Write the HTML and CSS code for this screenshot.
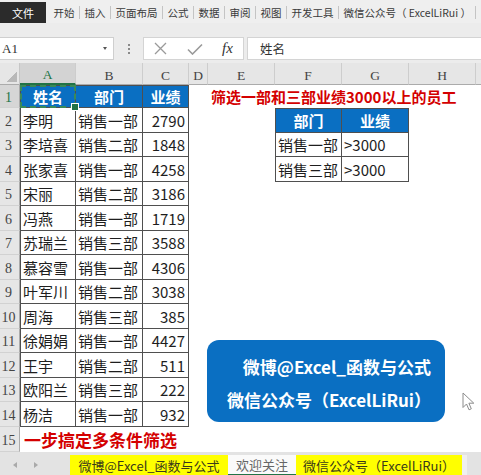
FILE: index.html
```html
<!DOCTYPE html>
<html lang="zh-CN">
<head>
<meta charset="utf-8">
<title>Excel</title>
<link rel="stylesheet" href="styles.css">
</head>
<body>
<div class="app">
  <div class="ribbon">
    <div class="file">文件</div>
    <div class="tab">开始</div>
    <div class="tab">插入</div>
    <div class="tab">页面布局</div>
    <div class="tab">公式</div>
    <div class="tab">数据</div>
    <div class="tab">审阅</div>
    <div class="tab">视图</div>
    <div class="tab">开发工具</div>
    <div class="tab">微信公众号（ ExcelLiRui ）</div>
  </div>

  <div class="fbar">
    <div class="namebox"><span class="ref">A1</span><span class="caret"></span></div>
    <div class="dots"><i></i><i></i><i></i></div>
    <div class="fxbox">
      <svg class="ico-x" width="13" height="13" viewBox="0 0 13 13"><path d="M1 1L12 12M12 1L1 12" stroke="#9a9a9a" stroke-width="1.3" fill="none"/></svg>
      <svg class="ico-ok" width="16" height="12" viewBox="0 0 16 12"><path d="M1 6.5L5.5 11L15 1.5" stroke="#9a9a9a" stroke-width="1.6" fill="none"/></svg>
      <span class="fx">fx</span>
    </div>
    <div class="formula">姓名</div>
  </div>

  <div class="sheet">
    <div class="row colhead">
      <div class="corner"><span class="tri"></span></div>
      <div class="ch on">A</div><div class="ch">B</div><div class="ch">C</div><div class="ch">D</div>
      <div class="ch">E</div><div class="ch">F</div><div class="ch">G</div><div class="ch">H</div><div class="ch last"></div>
    </div>

    <div class="row h23">
      <div class="rh on">1</div>
      <div class="c t tl tt hd ctr sel">姓名</div><div class="c t tt hd ctr">部门</div><div class="c t tt hd ctr">业绩</div>
      <div class="c"></div><div class="c title">筛选一部和三部业绩3000以上的员工</div><div class="c"></div><div class="c"></div><div class="c"></div><div class="c"></div>
    </div>
    <div class="row h25">
      <div class="rh">2</div>
      <div class="c t tl">李明</div><div class="c t">销售一部</div><div class="c t num">2790</div>
      <div class="c"></div><div class="c"></div><div class="c t tl tt hd ctr">部门</div><div class="c t tt hd ctr">业绩</div><div class="c"></div><div class="c"></div>
    </div>
    <div class="row h24">
      <div class="rh">3</div>
      <div class="c t tl">李培喜</div><div class="c t">销售二部</div><div class="c t num">1848</div>
      <div class="c"></div><div class="c"></div><div class="c t tl">销售一部</div><div class="c t">&gt;3000</div><div class="c"></div><div class="c"></div>
    </div>
    <div class="row h25">
      <div class="rh">4</div>
      <div class="c t tl">张家喜</div><div class="c t">销售一部</div><div class="c t num">4258</div>
      <div class="c"></div><div class="c"></div><div class="c t tl">销售三部</div><div class="c t">&gt;3000</div><div class="c"></div><div class="c"></div>
    </div>
    <div class="row h24">
      <div class="rh">5</div>
      <div class="c t tl">宋丽</div><div class="c t">销售二部</div><div class="c t num">3186</div>
      <div class="c"></div><div class="c"></div><div class="c"></div><div class="c"></div><div class="c"></div><div class="c"></div>
    </div>
    <div class="row h25">
      <div class="rh">6</div>
      <div class="c t tl">冯燕</div><div class="c t">销售一部</div><div class="c t num">1719</div>
      <div class="c"></div><div class="c"></div><div class="c"></div><div class="c"></div><div class="c"></div><div class="c"></div>
    </div>
    <div class="row h24">
      <div class="rh">7</div>
      <div class="c t tl">苏瑞兰</div><div class="c t">销售三部</div><div class="c t num">3588</div>
      <div class="c"></div><div class="c"></div><div class="c"></div><div class="c"></div><div class="c"></div><div class="c"></div>
    </div>
    <div class="row h25">
      <div class="rh">8</div>
      <div class="c t tl">慕容雪</div><div class="c t">销售一部</div><div class="c t num">4306</div>
      <div class="c"></div><div class="c"></div><div class="c"></div><div class="c"></div><div class="c"></div><div class="c"></div>
    </div>
    <div class="row h24">
      <div class="rh">9</div>
      <div class="c t tl">叶军川</div><div class="c t">销售二部</div><div class="c t num">3038</div>
      <div class="c"></div><div class="c"></div><div class="c"></div><div class="c"></div><div class="c"></div><div class="c"></div>
    </div>
    <div class="row h25">
      <div class="rh">10</div>
      <div class="c t tl">周海</div><div class="c t">销售三部</div><div class="c t num">385</div>
      <div class="c"></div><div class="c"></div><div class="c"></div><div class="c"></div><div class="c"></div><div class="c"></div>
    </div>
    <div class="row h24">
      <div class="rh">11</div>
      <div class="c t tl">徐娟娟</div><div class="c t">销售一部</div><div class="c t num">4427</div>
      <div class="c"></div><div class="c"></div><div class="c"></div><div class="c"></div><div class="c"></div><div class="c"></div>
    </div>
    <div class="row h25">
      <div class="rh">12</div>
      <div class="c t tl">王宇</div><div class="c t">销售二部</div><div class="c t num">511</div>
      <div class="c"></div><div class="c"></div><div class="c"></div><div class="c"></div><div class="c"></div><div class="c"></div>
    </div>
    <div class="row h24">
      <div class="rh">13</div>
      <div class="c t tl">欧阳兰</div><div class="c t">销售三部</div><div class="c t num">222</div>
      <div class="c"></div><div class="c"></div><div class="c"></div><div class="c"></div><div class="c"></div><div class="c"></div>
    </div>
    <div class="row h25">
      <div class="rh">14</div>
      <div class="c t tl">杨洁</div><div class="c t">销售一部</div><div class="c t num">932</div>
      <div class="c"></div><div class="c"></div><div class="c"></div><div class="c"></div><div class="c"></div><div class="c"></div>
    </div>
    <div class="row h25">
      <div class="rh">15</div>
      <div class="c slogan">一步搞定多条件筛选</div><div class="c"></div><div class="c"></div>
      <div class="c"></div><div class="c"></div><div class="c"></div><div class="c"></div><div class="c"></div><div class="c"></div>
    </div>
  </div>

  <div class="sheettabs">
    <div class="nav"><span class="arr-l"></span><span class="arr-r"></span></div>
    <div class="st yellow w1">微博@Excel_函数与公式</div>
    <div class="st active">欢迎关注</div>
    <div class="st yellow w3">微信公众号（ExcelLiRui）</div>
    <div class="st-end"></div>
  </div>

  <div class="promo">
    <div>微博@Excel_函数与公式</div>
    <div>微信公众号（ExcelLiRui）</div>
  </div>

  <svg class="cursor" width="13" height="19" viewBox="0 0 13 19"><path d="M1 1L1 15.5L4.5 12L7 17.8L9.3 16.8L6.9 11.2L11.8 11.2Z" fill="#fff" stroke="#8c8c8c" stroke-width="1" stroke-linejoin="round"/></svg>
</div>
</body>
</html>
```

FILE: styles.css
```css
* { box-sizing: border-box; margin: 0; padding: 0; }
html, body { width: 481px; height: 475px; overflow: hidden; }
body {
  font-family: "Noto Sans CJK SC", "Noto Sans", sans-serif;
  background: #ececec;
  color: #222;
}
.app { position: relative; width: 481px; height: 475px; }

/* ribbon */
.ribbon {
  height: 23px;
  display: flex;
  align-items: center;
  font-size: 10.5px;
  color: #3a3a3a;
  background: #efefef;
}
.file {
  align-self: flex-end;
  width: 46px;
  height: 21px;
  margin-right: 3px;
  background: #2b2b2b;
  color: #fff;
  display: flex;
  align-items: center;
  justify-content: center;
  font-size: 11px;
}
.tab {
  padding: 0 4.5px;
  line-height: 13px;
  border-right: 1px solid #c4c4c4;
  margin-top: 2px;
  white-space: nowrap;
}

/* formula bar */
.fbar {
  margin-top: 14px;
  height: 23px;
  display: flex;
}
.namebox {
  width: 114px;
  background: #fff;
  border: 1px solid #cfcfcf;
  border-left: none;
  display: flex;
  align-items: center;
  justify-content: space-between;
  padding: 0 6px 0 2px;
}
.ref { font-family: "Liberation Serif", serif; font-size: 13px; color: #333; }
.caret {
  width: 0; height: 0;
  border-left: 2.5px solid transparent;
  border-right: 2.5px solid transparent;
  border-top: 3px solid #555;
}
.dots {
  width: 29px;
  display: flex;
  flex-direction: column;
  align-items: center;
  justify-content: center;
  gap: 2px;
}
.dots i { width: 2px; height: 2px; background: #8a8a8a; display: block; }
.fxbox {
  width: 101px;
  background: #fff;
  border: 1px solid #d4d4d4;
  display: flex;
  align-items: center;
  padding-left: 10px;
}
.ico-x { margin-right: 20px; }
.ico-ok { margin-right: 19px; }
.fx { font-family: "Liberation Serif", serif; font-style: italic; font-size: 15px; color: #333; }
.formula {
  margin-left: 3px;
  flex: 1;
  background: #fff;
  border: 1px solid #d4d4d4;
  border-right: none;
  display: flex;
  align-items: center;
  padding-left: 12px;
  font-size: 12.5px;
  color: #333;
}

/* sheet */
.sheet { margin-top: 3px; background: #fff; }
.row {
  display: grid;
  grid-template-columns: 20px 56px 67px 46px 19px 67px 67px 67px 67px 5px;
}
.h23 { height: 23px; }
.h24 { height: 24px; }
.h25 { height: 25px; }
.colhead { height: 22px; background: #e6e6e6; }
.corner {
  border-right: 1px solid #c6c6c6;
  border-bottom: 1px solid #ababab;
  display: flex;
  align-items: flex-end;
  justify-content: flex-end;
  padding: 0 2px 2px 0;
}
.tri {
  width: 11px; height: 11px;
  background: linear-gradient(to bottom right, transparent 50%, #b8b8b8 50%);
}
.ch {
  font-family: "Liberation Serif", serif;
  font-size: 13.5px;
  color: #444;
  border-right: 1px solid #cdcdcd;
  border-bottom: 1px solid #ababab;
  display: flex;
  align-items: flex-end;
  justify-content: center;
  padding-bottom: 2px;
  line-height: 1;
}
.ch.on { background: #d3d3d3; color: #217346; border-bottom: 2px solid #217346; }
.ch.last { border-right: none; }

.rh {
  background: #e6e6e6;
  border-right: 1px solid #ababab;
  border-bottom: 1px solid #d2d2d2;
  font-family: "Liberation Serif", serif;
  font-size: 14px;
  color: #444;
  display: flex;
  align-items: center;
  justify-content: center;
  padding: 3px 2px 0 0;
  line-height: 1;
}
.rh.on { background: #d6d6d6; color: #217346; }

.c {
  display: flex;
  align-items: center;
  white-space: nowrap;
  padding: 0 2px;
  font-size: 15px;
  line-height: 1;
  color: #1e1e1e;
}
.t { border-right: 1px solid #4f4f4f; border-bottom: 1px solid #4f4f4f; }
.tl { border-left: 1px solid #4f4f4f; }
.tt { border-top: 1px solid #4f4f4f; }
.hd { background: #0a6fc2; color: #fff; font-weight: bold; }
.ctr { justify-content: center; }
.num { justify-content: flex-end; padding-right: 3px; }

.title {
  color: #d40000;
  font-weight: bold;
  font-size: 15px;
  padding-left: 3px;
}
.slogan {
  color: #d40000;
  font-weight: bold;
  font-size: 17px;
  padding-left: 4px;
}

.sel { position: relative; }
.sel::after {
  content: "";
  position: absolute;
  left: -1px; top: -1px; right: -1px; bottom: -1px;
  border: 2px dashed #3a8a5a;
}
.sel::before {
  content: "";
  position: absolute;
  right: -4px; bottom: -4px;
  width: 6px; height: 6px;
  background: #217346;
  border: 1px solid #fff;
  z-index: 1;
}

/* sheet tabs */
.sheettabs {
  height: 23px;
  background: #e3e3e3;
  display: flex;
  align-items: flex-end;
  font-size: 13px;
}
.nav {
  width: 70px;
  height: 100%;
  display: flex;
  align-items: center;
  padding-left: 13px;
  gap: 17px;
  padding-top: 2px;
}
.arr-l, .arr-r { width: 0; height: 0; border-top: 3.5px solid transparent; border-bottom: 3.5px solid transparent; }
.arr-l { border-right: 4px solid #a9a9a9; }
.arr-r { border-left: 4px solid #a9a9a9; }
.st {
  height: 20px;
  display: flex;
  align-items: center;
  justify-content: center;
  white-space: nowrap;
  color: #333;
  line-height: 1;
}
.yellow { background: #ffff00; color: #3a3a1a; }
.w1 { width: 158px; }
.w3 { width: 166px; }
.active { width: 68px; background: #fafafa; color: #666; border-bottom: 1px solid #217346; }
.st-end { width: 5px; height: 20px; background: #efefef; }

/* floating shape */
.promo {
  position: absolute;
  left: 207px; top: 340px;
  width: 238px; height: 82px;
  background: #0a6fc2;
  border-radius: 12px;
  color: #fff;
  font-weight: bold;
  font-size: 17px;
  line-height: 20px;
  display: flex;
  flex-direction: column;
  align-items: flex-end;
  justify-content: center;
  gap: 13px;
  padding: 5px 14px 0 0;
  white-space: nowrap;
}
.cursor { position: absolute; left: 462px; top: 392px; }
```
